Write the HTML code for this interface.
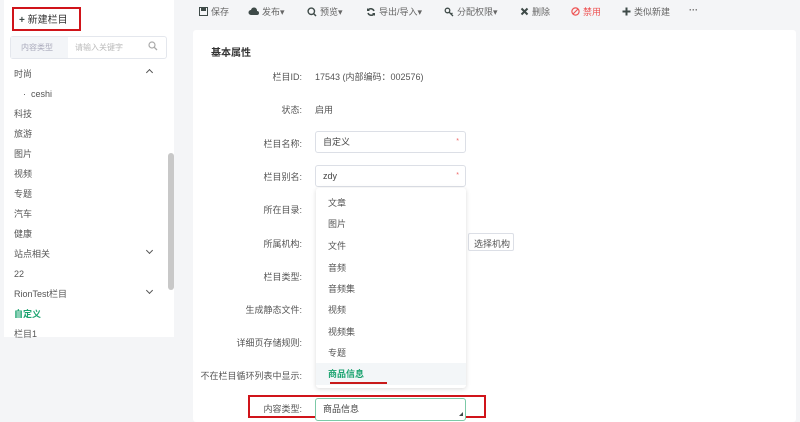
<!DOCTYPE html>
<html><head><meta charset="utf-8"><style>
*{margin:0;padding:0;box-sizing:border-box}
body{width:800px;height:422px;overflow:hidden;background:#f4f5f7;font-family:"Liberation Sans","Noto Sans CJK SC",sans-serif;font-size:9px;color:#555;position:relative}
.a{position:absolute;white-space:nowrap}
#side{left:4px;top:0;width:170px;height:337px;background:#fff}
#main{left:193px;top:30px;width:603px;height:392px;background:#fff;border-radius:3px}
.lbl{right:498px;text-align:right;color:#555}
.inp{left:315px;width:151px;height:22px;border:1px solid #dcdfe6;border-radius:3px;background:#fff;padding:0 7px;line-height:20px;color:#444}
.star{position:absolute;right:6px;top:0;color:#e66;font-size:7px}
.dd{left:316px;top:188px;width:150px;height:200px;background:#fff;box-shadow:0 1px 5px rgba(0,0,0,.15);border-radius:3px}
.it{left:12px;color:#555}
.tb{top:5px;color:#666;display:flex;align-items:center;gap:3px}
.tb svg{display:block}
.chev{width:5px;height:5px;border-right:1.5px solid #555;border-bottom:1.5px solid #555}
</style></head><body>
<div class="a" id="side"></div>
<div class="a" style="left:168px;top:153px;width:6px;height:137px;background:#c8c8c8;border-radius:3px"></div>
<div class="a" style="left:12px;top:7px;width:69px;height:24px;border:2px solid #d0141a"></div>
<div class="a" style="left:19px;top:11px;font-size:10px;color:#333"><b style="color:#3e4a48">+</b> 新建栏目</div>
<div class="a" style="left:10px;top:36px;width:157px;height:23px;border:1px solid #e4e7ed;border-radius:3px;background:#fff"></div>
<div class="a" style="left:11px;top:37px;width:57px;height:21px;background:#f3f5f8;color:#aab;padding:5px 0 0 10px;font-size:8px">内容类型</div>
<div class="a" style="left:75px;top:42px;color:#bbb;font-size:8px">请输入关键字</div>
<svg class="a" style="left:148px;top:41px" width="10" height="10" viewBox="0 0 10 10"><circle cx="4" cy="4" r="3" fill="none" stroke="#aaa" stroke-width="1.2"/><path d="M6.3 6.3L9 9" stroke="#aaa" stroke-width="1.3"/></svg>
<div class="a" style="left:14px;top:64px;line-height:20px;color:#555">时尚<br><span style="padding-left:9px">· &nbsp;ceshi</span><br>科技<br>旅游<br>图片<br>视频<br>专题<br>汽车<br>健康<br>站点相关<br>22<br>RionTest栏目<br><span style="color:#1aa36f;font-weight:bold">自定义</span><br>栏目1</div>
<div class="a chev" style="left:147px;top:70px;transform:rotate(-135deg)"></div>
<div class="a chev" style="left:147px;top:248px;transform:rotate(45deg)"></div>
<div class="a chev" style="left:147px;top:288px;transform:rotate(45deg)"></div>

<div class="a tb" style="left:199px"><svg width="9" height="9" viewBox="0 0 9 9"><rect x=".5" y=".5" width="8" height="8" fill="none" stroke="#3e4a48"/><rect x="2" y="1" width="5" height="3" fill="#3e4a48"/></svg>保存</div>
<div class="a tb" style="left:248px"><svg width="11" height="9" viewBox="0 0 11 9"><path d="M3 8h6a2 2 0 0 0 0-4 3 3 0 0 0-6-1 2.5 2.5 0 0 0 0 5z" fill="#3e4a48"/></svg>发布▾</div>
<div class="a tb" style="left:307px"><svg width="10" height="10" viewBox="0 0 10 10"><circle cx="4.3" cy="4.3" r="3.2" fill="none" stroke="#3e4a48" stroke-width="1.4"/><path d="M6.5 6.5L9 9" stroke="#3e4a48" stroke-width="1.5"/></svg>预览▾</div>
<div class="a tb" style="left:366px"><svg width="10" height="10" viewBox="0 0 10 10"><path d="M8 4A3.5 3.5 0 0 0 2 3M2 6a3.5 3.5 0 0 0 6 1" fill="none" stroke="#3e4a48" stroke-width="1.5"/><path d="M1 1v3h3zM9 9V6H6z" fill="#3e4a48"/></svg>导出/导入▾</div>
<div class="a tb" style="left:444px"><svg width="10" height="10" viewBox="0 0 10 10"><circle cx="3.5" cy="3.5" r="2.3" fill="none" stroke="#3e4a48" stroke-width="1.3"/><path d="M5 5l4 4M7 7l1.5-1" stroke="#3e4a48" stroke-width="1.3"/></svg>分配权限▾</div>
<div class="a tb" style="left:520px"><svg width="9" height="9" viewBox="0 0 9 9"><path d="M1.5 1.5l6 6M7.5 1.5l-6 6" stroke="#3e4a48" stroke-width="2"/></svg>删除</div>
<div class="a tb" style="left:571px;color:#e55"><svg width="9" height="9" viewBox="0 0 9 9"><circle cx="4.5" cy="4.5" r="3.6" fill="none" stroke="#e55" stroke-width="1.2"/><path d="M2 7L7 2" stroke="#e55" stroke-width="1.2"/></svg>禁用</div>
<div class="a tb" style="left:622px"><svg width="9" height="9" viewBox="0 0 9 9"><path d="M4.5 0.5v8M0.5 4.5h8" stroke="#3e4a48" stroke-width="2"/></svg>类似新建</div>
<div class="a tb" style="left:689px;font-weight:bold">···</div>

<div class="a" id="main"></div>
<div class="a" style="left:211px;top:44px;font-size:10px;font-weight:bold;color:#333">基本属性</div>
<div class="a lbl" style="top:70px">栏目ID:</div>
<div class="a" style="left:315px;top:70px">17543 (内部编码：002576)</div>
<div class="a lbl" style="top:103px">状态:</div>
<div class="a" style="left:315px;top:103px">启用</div>
<div class="a lbl" style="top:137px">栏目名称:</div>
<div class="a inp" style="top:131px">自定义<span class="star">*</span></div>
<div class="a lbl" style="top:170px">栏目别名:</div>
<div class="a inp" style="top:165px">zdy<span class="star">*</span></div>
<div class="a lbl" style="top:203px">所在目录:</div>
<div class="a lbl" style="top:237px">所属机构:</div>
<div class="a" style="left:468px;top:233px;width:46px;height:18px;border:1px solid #dcdfe6;border-radius:2px;padding:3px 0 0 5px">选择机构</div>
<div class="a lbl" style="top:270px">栏目类型:</div>
<div class="a lbl" style="top:303px">生成静态文件:</div>
<div class="a lbl" style="top:336px">详细页存储规则:</div>
<div class="a lbl" style="top:369px">不在栏目循环列表中显示:</div>
<div class="a dd">
<div class="a it" style="top:8px">文章</div>
<div class="a it" style="top:29px">图片</div>
<div class="a it" style="top:51px">文件</div>
<div class="a it" style="top:73px">音频</div>
<div class="a it" style="top:94px">音频集</div>
<div class="a it" style="top:115px">视频</div>
<div class="a it" style="top:137px">视频集</div>
<div class="a" style="left:0;top:175px;width:150px;height:22px;background:#f3f6f8"></div>
<div class="a it" style="top:158px">专题</div>
<div class="a it" style="top:179px;color:#1aa36f;font-weight:bold">商品信息</div>
<div class="a" style="left:14px;top:194px;width:57px;height:2px;background:#c81a1a"></div>
</div>
<div class="a" style="left:248px;top:395px;width:238px;height:23px;border:2px solid #d0141a"></div>
<div class="a" style="right:498px;top:402px;color:#555">内容类型:</div>
<div class="a inp" style="top:398px;border-color:#7cc9a7;height:23px">商品信息</div>
<div class="a" style="left:459px;top:412px;width:0;height:0;border-left:4px solid transparent;border-bottom:4px solid #3e4a48"></div>
</body></html>
